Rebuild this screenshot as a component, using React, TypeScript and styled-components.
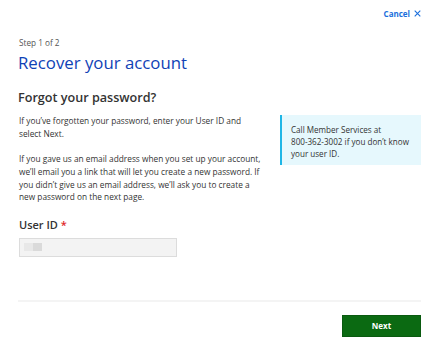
import styled, { createGlobalStyle } from 'styled-components';

const GlobalStyle = createGlobalStyle`
    html, body {
        margin: 0;
        padding: 0;
        background: #fff;
    }
    body {
        font-family: "Open Sans", "Liberation Sans", sans-serif;
        color: #333;
    }
`
const Page = styled.div`
    width: 432px;
    box-sizing: border-box;
    padding: 0 11px 0 18px;
`
const TopBar = styled.div`
    display: flex;
    justify-content: flex-end;
    padding-top: 5px;
    height: 22px;
    box-sizing: border-box;
`
const CancelLink = styled.a`
    display: flex;
    align-items: center;
    gap: 4px;
    font-size: 8px;
    line-height: 12px;
    font-weight: 700;
    color: #1b6fdc;
    text-decoration: none;
    cursor: pointer;
`
const Step = styled.div`
    margin-top: 15px;
    font-size: 8.2px;
    line-height: 12px;
    color: #555;
    padding-left: 1px;
`
const Title = styled.h1`
    margin: 3px 0 0;
    font-size: 16.8px;
    line-height: 22px;
    font-weight: 400;
    color: #0f42b6;
`
const Heading = styled.h2`
    margin: 15px 0 0;
    font-size: 12.6px;
    line-height: 18px;
    font-weight: 600;
    color: #333;
`
const Body = styled.div`
    display: grid;
    grid-template-columns: 246px 141px;
    justify-content: space-between;
    margin-top: 8px;
    align-items: start;
`
const Main = styled.div`
    padding-left: 1px;
`
const Para = styled.p`
    margin: 0 0 12.7px;
    font-size: 8.3px;
    line-height: 12.7px;
    color: #333;
`
const Info = styled.aside`
    background: #e6f8fd;
    border-left: 2px solid #1fb6e6;
    padding: 9px 10px 5px 9px;
    font-size: 8.1px;
    line-height: 12px;
    color: #333;
`
const Label = styled.label`
    display: block;
    font-size: 11px;
    line-height: 16px;
    font-weight: 600;
    color: #333;
`
const Required = styled.span`
    color: #e0262b;
`
const Input = styled.div`
    margin-top: 5px;
    width: 158px;
    height: 19px;
    box-sizing: border-box;
    background: #f3f3f3;
    border: 1px solid #dcdcdc;
    display: flex;
    align-items: center;
    padding-left: 4px;
`
const Redacted = styled.span<{ $tone: string }>`
    width: 9px;
    height: 8px;
    background: ${p => p.$tone};
`
const Divider = styled.hr`
    margin: 43px 0 0;
    border: 0;
    border-top: 2px solid #f4f4f4;
`
const Footer = styled.div`
    display: flex;
    justify-content: flex-end;
    margin-top: 13px;
`
const NextButton = styled.button`
    width: 79px;
    height: 22px;
    background: #0b6a12;
    border: 1px solid #0a5a10;
    color: #fff;
    font-family: "Open Sans", "Liberation Sans", sans-serif;
    font-size: 8px;
    font-weight: 700;
    cursor: pointer;
`

function App() {
    return (
        <Page>
            <GlobalStyle />
            <TopBar>
                <CancelLink>
                    Cancel
                    <svg width="7" height="7" viewBox="0 0 7 7">
                        <path d="M0.7 0.7 L6.3 6.3 M6.3 0.7 L0.7 6.3" stroke="#1b6fdc" strokeWidth="1.1" />
                    </svg>
                </CancelLink>
            </TopBar>
            <Step>Step 1 of 2</Step>
            <Title>Recover your account</Title>
            <Heading>Forgot your password?</Heading>
            <Body>
                <Main>
                    <Para>If you’ve forgotten your password, enter your User ID and select Next.</Para>
                    <Para>
                        If you gave us an email address when you set up your account, we’ll email you a link that will let you create a new password. If you didn’t give us an email address, we’ll ask you to create a new password on the next page.
                    </Para>
                    <Label>User ID <Required>*</Required></Label>
                    <Input>
                        <Redacted $tone="#e8e8e8" />
                        <Redacted $tone="#dadada" />
                    </Input>
                </Main>
                <Info>Call Member Services at<br />800-362-3002 if you don’t know your user ID.</Info>
            </Body>
            <Divider />
            <Footer>
                <NextButton>Next</NextButton>
            </Footer>
        </Page>
    )
}
export default App;
